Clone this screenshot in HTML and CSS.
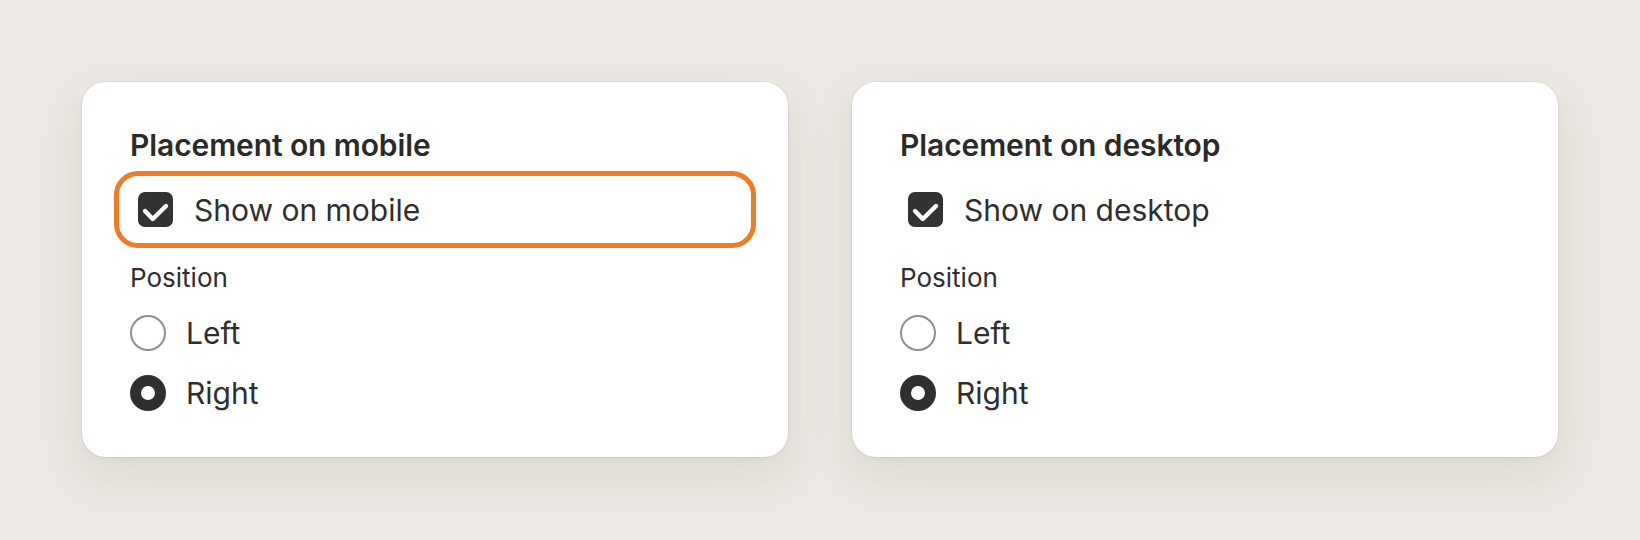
FILE: index.html
```html
<!DOCTYPE html>
<html lang="en">
<head>
<meta charset="utf-8">
<title>Placement settings</title>
<link rel="stylesheet" href="styles.css">
</head>
<body>
<main class="page">
  <section class="card">
    <h2 class="card-title">Placement on mobile</h2>
    <label class="check-row is-focused">
      <span class="checkbox">
        <svg viewBox="0 0 35 35" width="35" height="35" aria-hidden="true"><path d="M7 19 L14.8 27 L28 14" fill="none" stroke="#fff" stroke-width="4.4" stroke-linecap="round" stroke-linejoin="round"/></svg>
      </span>
      <span class="check-label">Show on mobile</span>
    </label>
    <div class="field-label">Position</div>
    <div class="radio-group">
      <label class="radio-row"><span class="radio"></span><span class="radio-label">Left</span></label>
      <label class="radio-row"><span class="radio is-checked"></span><span class="radio-label">Right</span></label>
    </div>
  </section>
  <section class="card">
    <h2 class="card-title">Placement on desktop</h2>
    <label class="check-row">
      <span class="checkbox">
        <svg viewBox="0 0 35 35" width="35" height="35" aria-hidden="true"><path d="M7 19 L14.8 27 L28 14" fill="none" stroke="#fff" stroke-width="4.4" stroke-linecap="round" stroke-linejoin="round"/></svg>
      </span>
      <span class="check-label">Show on desktop</span>
    </label>
    <div class="field-label">Position</div>
    <div class="radio-group">
      <label class="radio-row"><span class="radio"></span><span class="radio-label">Left</span></label>
      <label class="radio-row"><span class="radio is-checked"></span><span class="radio-label">Right</span></label>
    </div>
  </section>
</main>
</body>
</html>
```

FILE: styles.css
```css
* { box-sizing: border-box; }

html, body {
  margin: 0;
  padding: 0;
  background: #ece9e4;
  font-family: Inter, "Noto Sans", "Liberation Sans", sans-serif;
  color: #2e2e2e;
}

.page {
  display: flex;
  gap: 64px;
  padding: 82px;
  align-items: flex-start;
}

.card {
  flex: 1 1 0;
  background: #fff;
  border-radius: 24px;
  padding: 46px 48px 40px;
  box-shadow: 0 0 0 1px rgba(0, 0, 0, 0.035), 0 18px 44px rgba(90, 80, 60, 0.10), 0 2px 6px rgba(0, 0, 0, 0.04);
}

.card-title {
  margin: 0 0 22px;
  font-size: 30px;
  font-weight: 600;
  line-height: 34px;
  color: #2a2a2a;
  letter-spacing: -0.1px;
}

.check-row {
  display: flex;
  align-items: center;
  gap: 21px;
  margin: 0 -3px;
  padding: 8px 11px;
  border-radius: 11px;
}

.check-row.is-focused {
  outline: 5px solid #f07b24;
  outline-offset: 8px;
}

.checkbox {
  width: 35px;
  height: 35px;
  border-radius: 7px;
  background: #333333;
  display: flex;
  flex: none;
}

.check-label,
.radio-label {
  font-size: 30px;
  line-height: 34px;
  color: #2e2e2e;
}

.field-label {
  margin-top: 28px;
  font-size: 26px;
  line-height: 29px;
  color: #2e2e2e;
}

.radio-group {
  margin-top: 17px;
  display: flex;
  flex-direction: column;
  gap: 12px;
}

.radio-row {
  display: flex;
  align-items: center;
  gap: 20px;
  height: 48px;
}

.radio {
  width: 36px;
  height: 36px;
  border-radius: 50%;
  border: 2px solid #8f8f8f;
  flex: none;
}

.radio.is-checked {
  border: 11px solid #2f2f2f;
  background: #fff;
}
```
